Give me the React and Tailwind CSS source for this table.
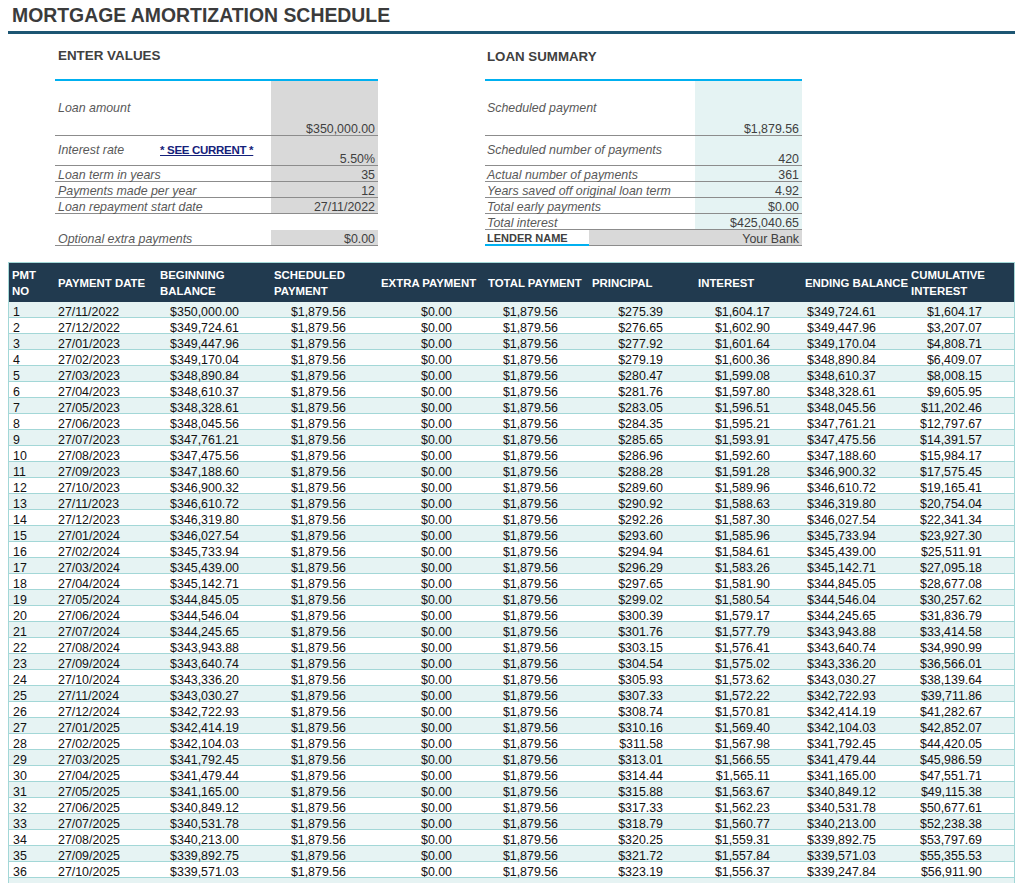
import React from "react";

const RATE = 0.055 / 12;
const TERM = 420;
const LOAN = 350000;
const PMT = (LOAN * RATE) / (1 - Math.pow(1 + RATE, -TERM));

const money = (v) =>
  "$" +
  v.toLocaleString("en-US", {
    minimumFractionDigits: 2,
    maximumFractionDigits: 2,
  });

function buildRows(count) {
  const rows = [];
  let balance = LOAN;
  let cumulative = 0;
  for (let i = 0; i < count; i++) {
    const month = (10 + i) % 12;
    const year = 2022 + Math.floor((10 + i) / 12);
    const interest = balance * RATE;
    const principal = PMT - interest;
    const end = balance - principal;
    cumulative += interest;
    rows.push({
      no: i + 1,
      date: `27/${String(month + 1).padStart(2, "0")}/${year}`,
      begin: balance,
      principal,
      interest,
      end,
      cumulative,
    });
    balance = end;
  }
  return rows;
}

const rows = buildRows(36);

const headers = [
  ["PMT", "NO"],
  ["PAYMENT DATE"],
  ["BEGINNING", "BALANCE"],
  ["SCHEDULED", "PAYMENT"],
  ["EXTRA PAYMENT"],
  ["TOTAL PAYMENT"],
  ["PRINCIPAL"],
  ["INTEREST"],
  ["ENDING BALANCE"],
  ["CUMULATIVE", "INTEREST"],
];

const gridCols =
  "grid grid-cols-[46px_102px_114px_107px_107px_104px_106px_107px_106px_1fr]";

// label centred in tall rows, sat on the line in the 16px ones
const EnterRow = ({ label, value, tall, blank }) => (
  <div
    className={`flex ${tall ? "h-[55px]" : "h-[16px]"} ${
      blank ? "" : "border-b border-[#8c8c8c]"
    }`}
  >
    <div
      className={`w-[216px] flex pl-[3px] italic text-[#595959] ${
        tall ? "items-center leading-[15px]" : "items-end leading-[11px]"
      }`}
    >
      {label}
    </div>
    <div
      className={`w-[107px] flex items-end justify-end pr-[3px] leading-[11px] text-[#404040] ${
        blank ? "" : "bg-[#d9d9d9]"
      }`}
    >
      {value}
    </div>
  </div>
);

const SummaryRow = ({ label, value, h = "h-[16px]", tall }) => (
  <div className={`flex ${h} border-b border-[#8c8c8c]`}>
    <div
      className={`w-[210px] flex pl-[2px] italic text-[#595959] ${
        tall ? "items-center leading-[15px]" : "items-end leading-[11px]"
      }`}
    >
      {label}
    </div>
    <div className="w-[107px] flex items-end justify-end pr-[3px] leading-[11px] text-[#404040] bg-[#e5f3f3]">
      {value}
    </div>
  </div>
);

export default function App() {
  return (
    <div className="w-[1023px] bg-white px-[8px] font-['Liberation_Sans',Arial,sans-serif] text-[12.4px]">
      <div className="h-[31px] flex items-center pl-[4px] text-[19.4px] font-bold text-[#3b3b3b]">
        MORTGAGE AMORTIZATION SCHEDULE
      </div>
      <div className="h-[3px] bg-[#1d5673]" />

      <div className="flex h-[228px]">
        {/* enter values */}
        <div className="ml-[47px] w-[323px]">
          <div className="h-[45px] flex items-center pl-[3px] text-[13.4px] font-bold text-[#404040]">
            ENTER VALUES
          </div>
          <div className="h-[2px] bg-[#00b0f0]" />
          <EnterRow label="Loan amount" value="$350,000.00" tall />
          <div className="flex h-[30px] border-b border-[#8c8c8c]">
            <div className="w-[216px] flex items-center pl-[3px] leading-[15px]">
              <span className="w-[102px] italic text-[#595959]">
                Interest rate
              </span>
              <span className="text-[11.5px] font-bold text-[#14217a] underline tracking-[-0.3px]">
                * SEE CURRENT *
              </span>
            </div>
            <div className="w-[107px] flex items-end justify-end pr-[3px] leading-[11px] text-[#404040] bg-[#d9d9d9]">
              5.50%
            </div>
          </div>
          <EnterRow label="Loan term in years" value="35" />
          <EnterRow label="Payments made per year" value="12" />
          <EnterRow label="Loan repayment start date" value="27/11/2022" />
          <EnterRow blank />
          <EnterRow label="Optional extra payments" value="$0.00" />
        </div>

        {/* loan summary */}
        <div className="ml-[107px] w-[317px]">
          <div className="h-[45px] flex items-center pl-[2px] text-[13.3px] font-bold text-[#404040]">
            LOAN SUMMARY
          </div>
          <div className="h-[2px] bg-[#00b0f0]" />
          <SummaryRow
            label="Scheduled payment"
            value="$1,879.56"
            h="h-[55px]"
            tall
          />
          <SummaryRow
            label="Scheduled number of payments"
            value="420"
            h="h-[30px]"
            tall
          />
          <SummaryRow label="Actual number of payments" value="361" />
          <SummaryRow label="Years saved off original loan term" value="4.92" />
          <SummaryRow label="Total early payments" value="$0.00" />
          <SummaryRow label="Total interest" value="$425,040.65" />
          <div className="flex h-[16px]">
            <div className="w-[104px] flex items-end pl-[2px] text-[11px] font-bold text-[#404040] border-b-2 border-[#00b0f0] leading-[11px]">
              LENDER NAME
            </div>
            <div className="flex-1 flex items-end justify-end pr-[3px] bg-[#d9d9d9] border-b border-[#8c8c8c] leading-[11px] text-[#404040]">
              Your Bank
            </div>
          </div>
        </div>
      </div>

      {/* schedule */}
      <div className="border-l border-r border-t border-[#a3d7d7]">
        <div
          className={`${gridCols} h-[39px] pt-[1px] bg-[#213a4f] text-white font-bold text-[11.4px] leading-[16px]`}
        >
          {headers.map((h, i) => (
            <div
              key={i}
              className="flex flex-col justify-center pl-[3px] whitespace-nowrap"
            >
              {h.map((line) => (
                <span key={line}>{line}</span>
              ))}
            </div>
          ))}
        </div>
        {rows.map((r, i) => (
          <div
            key={r.no}
            className={`${gridCols} h-[16px] pt-[3px] border-b border-[#a3d7d7] text-[#111111] leading-[15px] ${
              i % 2 === 0 ? "bg-[#e6f3f3]" : "bg-white"
            }`}
          >
            <div className="pl-[4px]">{r.no}</div>
            <div className="pl-[3px]">{r.date}</div>
            <div className="text-right pr-[32px]">{money(r.begin)}</div>
            <div className="text-right pr-[32px]">{money(PMT)}</div>
            <div className="text-right pr-[33px]">$0.00</div>
            <div className="text-right pr-[31px]">{money(PMT)}</div>
            <div className="text-right pr-[32px]">{money(r.principal)}</div>
            <div className="text-right pr-[32px]">{money(r.interest)}</div>
            <div className="text-right pr-[32px]">{money(r.end)}</div>
            <div className="text-right pr-[32px]">{money(r.cumulative)}</div>
          </div>
        ))}
        <div className="h-[16px] bg-[#e6f3f3] border-b border-[#a3d7d7]" />
      </div>
    </div>
  );
}
